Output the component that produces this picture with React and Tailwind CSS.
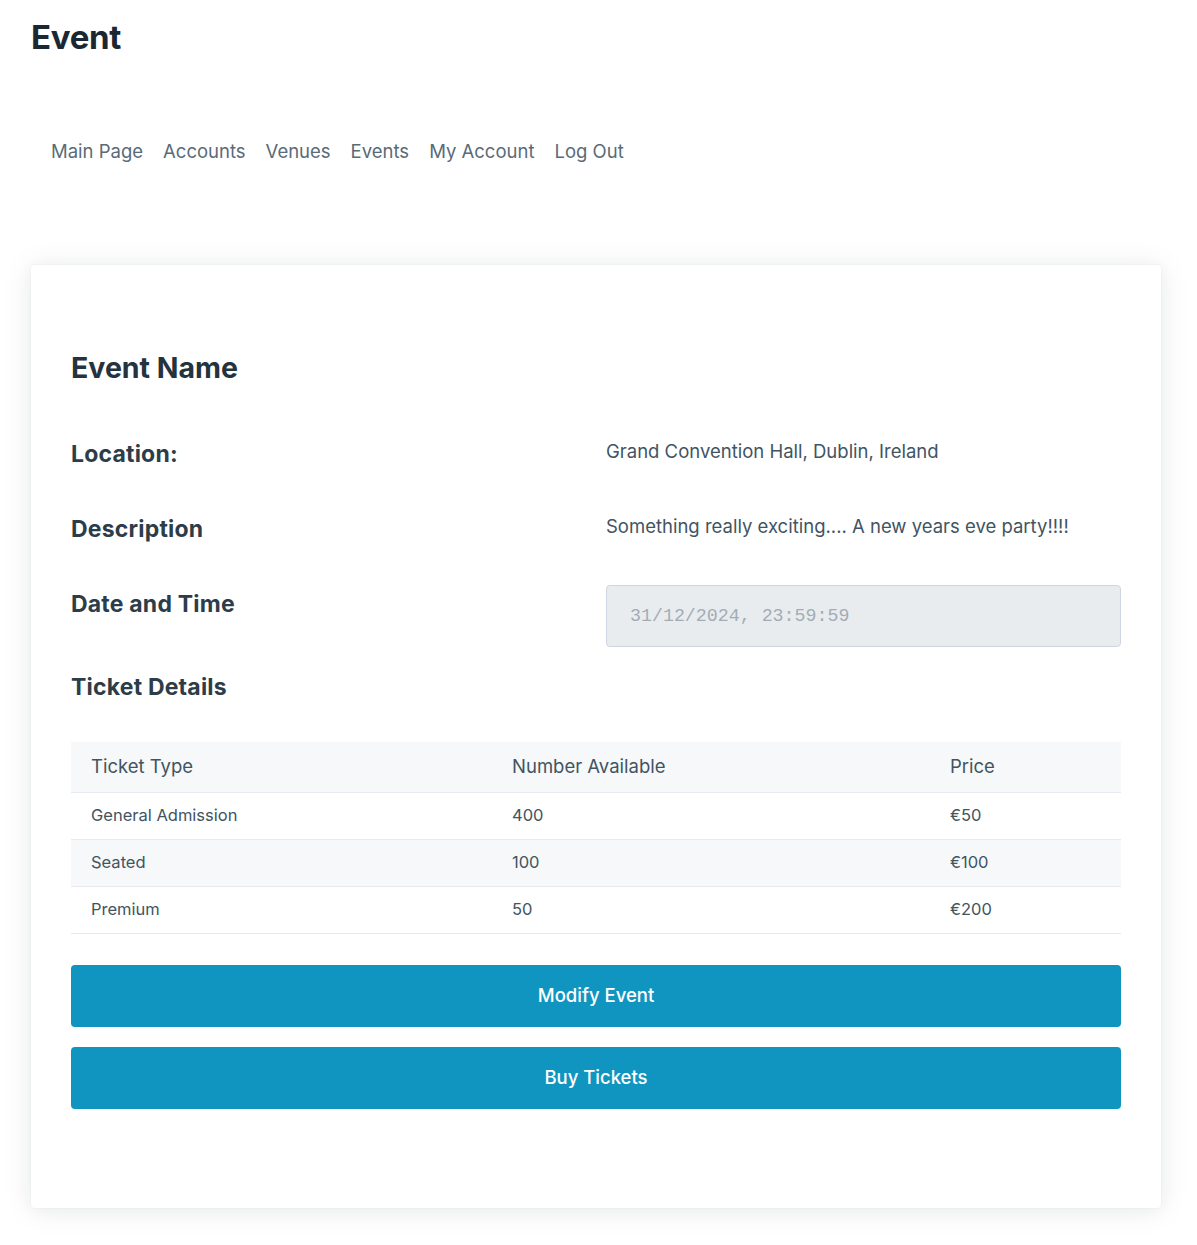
const tickets = [
  { type: "General Admission", available: 400, price: "€50" },
  { type: "Seated", available: 100, price: "€100" },
  { type: "Premium", available: 50, price: "€200" },
];

const navLinks = ["Main Page", "Accounts", "Venues", "Events", "My Account", "Log Out"];

const App = () => {
  return (
    <div className="min-h-[1245px] bg-white font-['Inter','Liberation_Sans',sans-serif] text-[#415462]">
      <header className="px-[31px] pt-[19px]">
        <h1 className="text-[33px] font-bold leading-[36px] tracking-[-0.3px] text-[#1b2832]">Event</h1>
      </header>

      <nav className="mt-[82px] flex gap-5 px-[51px]">
        {navLinks.map((link) => (
          <a key={link} href="#" className="text-[18.5px] leading-[28px] text-[#596b78]">
            {link}
          </a>
        ))}
      </nav>

      <main className="mx-[31px] mt-[100px] w-[1130px] rounded-[4px] bg-white px-10 pb-[99px] pt-[86px] shadow-[0_0.125rem_1rem_rgba(27,40,50,0.04),0_0.125rem_2rem_rgba(27,40,50,0.08),0_0_0_0.0625rem_rgba(27,40,50,0.02)]">
        <h2 className="text-[28.5px] font-bold leading-[34px] text-[#24333e]">Event Name</h2>

        <div className="mt-[55px] grid grid-cols-2 gap-x-5">
          <div className="h-[75px]">
            <h3 className="text-[23px] font-bold leading-[28px] tracking-[0.2px] text-[#2c3d49]">Location:</h3>
          </div>
          <p className="text-[18.5px] leading-[22px] text-[#415462]">Grand Convention Hall, Dublin, Ireland</p>

          <div className="h-[70px]">
            <h3 className="text-[23px] font-bold leading-[28px] tracking-[0.2px] text-[#2c3d49]">Description</h3>
          </div>
          <p className="text-[18.5px] leading-[22px] text-[#415462]">
            Something really exciting.... A new years eve party!!!!
          </p>

          <div className="pt-[5px]">
            <h3 className="text-[23px] font-bold leading-[28px] tracking-[0.2px] text-[#2c3d49]">Date and Time</h3>
          </div>
          <input
            type="text"
            disabled
            value="31/12/2024, 23:59:59"
            className="h-[62px] w-full rounded-[4px] border border-[#cfd5e2] bg-[#e9ecef] px-[23px] font-['Liberation_Mono',monospace] text-[18.3px] text-[#a2acb5]"
          />
        </div>

        <h3 className="mt-[26px] text-[23px] font-bold leading-[28px] tracking-[0.2px] text-[#2c3d49]">Ticket Details</h3>

        <table className="mt-[41px] w-full border-collapse text-left">
          <thead>
            <tr className="bg-[#f6f8f9]">
              <th className="h-[50px] w-[421px] border-b border-[#e7eaf0] px-5 text-[18.5px] font-normal text-[#415462]">Ticket Type</th>
              <th className="h-[50px] w-[438px] border-b border-[#e7eaf0] px-5 text-[18.5px] font-normal text-[#415462]">Number Available</th>
              <th className="h-[50px] border-b border-[#e7eaf0] px-5 text-[18.5px] font-normal text-[#415462]">Price</th>
            </tr>
          </thead>
          <tbody>
            {tickets.map((t, i) => (
              <tr key={t.type} className={i % 2 === 1 ? "bg-[#f6f8f9]" : "bg-white"}>
                <td className="h-[47px] border-b border-[#e7eaf0] px-5 text-[16.5px] text-[#415462]">{t.type}</td>
                <td className="h-[47px] border-b border-[#e7eaf0] px-5 text-[16.5px] text-[#415462]">{t.available}</td>
                <td className="h-[47px] border-b border-[#e7eaf0] px-5 text-[16.5px] text-[#415462]">{t.price}</td>
              </tr>
            ))}
          </tbody>
        </table>

        <div className="mt-[31px] flex flex-col gap-[20px]">
          <button className="h-[62px] w-full rounded-[4px] bg-[#1095c1] text-[18.5px] font-medium text-white">
            Modify Event
          </button>
          <button className="h-[62px] w-full rounded-[4px] bg-[#1095c1] text-[18.5px] font-medium text-white">
            Buy Tickets
          </button>
        </div>
      </main>
    </div>
  );
};

export default App;
